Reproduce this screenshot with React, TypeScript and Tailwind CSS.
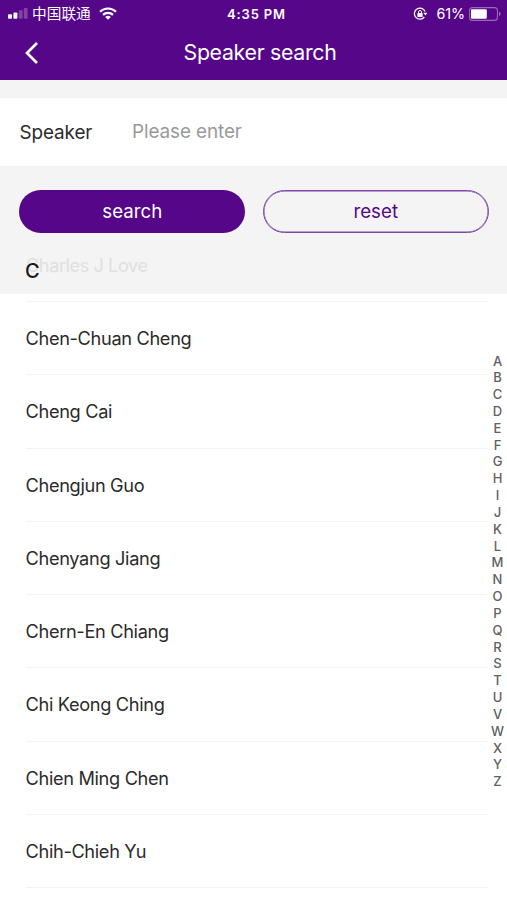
import { useState } from 'react'

const speakers = [
  'Chen-Chuan Cheng',
  'Cheng Cai',
  'Chengjun Guo',
  'Chenyang Jiang',
  'Chern-En Chiang',
  'Chi Keong Ching',
  'Chien Ming Chen',
  'Chih-Chieh Yu'
]

const letters = 'ABCDEFGHIJKLMNOPQRSTUVWXYZ'.split('')

function StatusBar() {
  return (
    <div className="h-[27px] relative flex items-center justify-between pl-2 pr-[6px] text-white">
      <div className="flex items-center">
        <svg width="20" height="11" viewBox="0 0 20 11" fill="currentColor">
          <rect x="0" y="6.2" width="4" height="4.6" rx="1" />
          <rect x="5.4" y="4.4" width="4" height="6.4" rx="1" />
          <rect x="10.8" y="2.2" width="3.8" height="8.6" rx="1" opacity="0.25" />
          <rect x="15.8" y="0" width="3.8" height="10.8" rx="1" opacity="0.25" />
        </svg>
        <span className="ml-[4px] pt-[2px] text-[14.7px] leading-none">中国联通</span>
        <svg className="ml-[8px]" width="18" height="13" viewBox="0 0 18 13" fill="none" stroke="currentColor" strokeWidth="2.2">
          <path d="M1 4.8a11.4 11.4 0 0 1 16 0" />
          <path d="M4 7.9a7.1 7.1 0 0 1 10 0" />
          <path d="M9 12.8 6.2 10a4 4 0 0 1 5.6 0z" fill="currentColor" stroke="none" />
        </svg>
      </div>
      <span className="absolute inset-x-0 top-[5px] text-center pl-[6px] text-[13px] font-semibold leading-[19px] tracking-[0.85px]">4:35 PM</span>
      <div className="flex items-center">
        <svg width="15" height="14" viewBox="0 0 15 14" fill="none" stroke="currentColor" strokeWidth="1.3">
          <path d="M11.3 10A5.5 5.5 0 1 1 12 4.6" />
          <path d="M10.4 5.8h4l-2 2.7z" fill="currentColor" stroke="none" />
          <rect x="4.4" y="6" width="5.2" height="4" rx="0.5" fill="currentColor" stroke="none" />
          <path d="M5.5 6.5V5a1.5 1.5 0 0 1 3 0v1.5" strokeWidth="1" />
        </svg>
        <span className="ml-[9px] pt-px text-[14.3px] tracking-[-0.1px]">61%</span>
        <svg className="ml-1" width="32" height="14" viewBox="0 0 32 14" fill="none">
          <rect x="0.6" y="0.6" width="27.8" height="12.8" rx="3" stroke="white" strokeOpacity="0.4" strokeWidth="1.1" />
          <rect x="2" y="2.3" width="15.8" height="9.4" rx="1" fill="white" />
          <path d="M30 4.8v4.4c1-.3 1.6-1.2 1.6-2.2S31 5.1 30 4.8z" fill="white" fillOpacity="0.4" />
        </svg>
      </div>
    </div>
  )
}

export default function App() {
  const [name, setName] = useState('')

  return (
    <div className="relative h-[900px] w-[507px] overflow-hidden bg-white font-['Inter','Noto_Sans_CJK_SC',sans-serif] text-[#2b2b2b]">
      {/* Header */}
      <header className="h-20 bg-[#560689]">
        <StatusBar />
        <div className="relative flex h-[52px] items-center justify-center pl-[13px] text-white">
          <button className="absolute left-[24px] top-[14px]" aria-label="Back">
            <svg width="15" height="24" viewBox="0 0 15 24" fill="none" stroke="currentColor" strokeWidth="2.7">
              <path d="M13 2 3 12l10 10" />
            </svg>
          </button>
          <h1 className="text-[21.3px] tracking-[-0.3px]">Speaker search</h1>
        </div>
      </header>

      {/* Search form */}
      <div className="bg-[#f4f4f4] pt-[18px]">
        <div className="flex h-[68px] items-center bg-white pl-[19.5px] text-[18.9px] tracking-[-0.1px]">
          <label className="w-[112.5px] pt-[2px]">Speaker</label>
          <input
            value={name}
            onChange={e => setName(e.target.value)}
            placeholder="Please enter"
            className="w-64 outline-none placeholder:text-[#999999]"
          />
        </div>
        <div className="flex gap-[18px] pl-[19px] pr-[18px] pt-6 text-[18.7px]">
          <button className="h-[43px] flex-1 rounded-full bg-[#560689] pl-px pt-[2px] text-white">search</button>
          <button
            onClick={() => setName('')}
            className="h-[43px] flex-1 rounded-full border border-[#7c45a8] pt-[2px] text-[#560689] shadow-[inset_0_0_0_0.5px_#7c45a8]"
          >
            reset
          </button>
        </div>
        <div className="relative h-[61px] pl-[26px] pt-[18px]">
          <p className="text-[18.2px] leading-7 tracking-[-0.45px] text-[#e0e0e0]">Charles J Love</p>
          <h2 className="absolute left-[25px] top-[24px] text-[20px] font-medium leading-7 text-[#1a1a1a]">C</h2>
        </div>
      </div>

      {/* Speaker list */}
      <ul className="ml-[25.5px] mr-[19px] mt-[7px] border-t border-[#f3f3f3]">
        {speakers.map(speaker => (
          <li key={speaker} className="flex h-[73.3px] items-center border-b border-[#f3f3f3] pt-px text-[18.2px] tracking-[-0.33px]">
            {speaker}
          </li>
        ))}
      </ul>

      {/* Letter index */}
      <nav className="absolute right-0 top-[352.5px] flex w-[19px] flex-col text-center text-[13px] font-medium text-[#606060]">
        {letters.map(letter => (
          <span key={letter} className="h-[16.84px] leading-[16.84px]">{letter}</span>
        ))}
      </nav>
    </div>
  )
}
